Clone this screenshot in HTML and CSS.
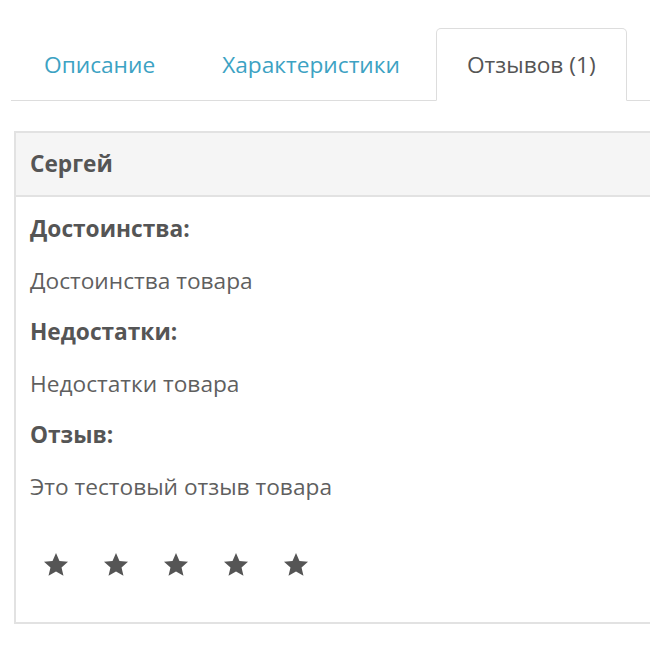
FILE: index.html
```html
<!DOCTYPE html>
<html lang="en">
<head>
    <meta charset="UTF-8">
    <title>Отзывы</title>
    <link rel="stylesheet" href="styles.css">
</head>
<body>
    <div class="page">
        <ul class="tabs">
            <li><a href="#">Описание</a></li>
            <li><a href="#">Характеристики</a></li>
            <li class="active"><a href="#">Отзывов (1)</a></li>
        </ul>

        <div class="review">
            <div class="review-head">Сергей</div>
            <div class="review-body">
                <p class="label">Достоинства:</p>
                <p>Достоинства товара</p>
                <p class="label">Недостатки:</p>
                <p>Недостатки товара</p>
                <p class="label">Отзыв:</p>
                <p>Это тестовый отзыв товара</p>
                <div class="stars">
                    <svg viewBox="0 0 24 24"><path d="M12 1l3.2 7.3 7.9.7-6 5.2 1.8 7.8L12 17.9 5.1 22l1.8-7.8-6-5.2 7.9-.7z"/></svg>
                    <svg viewBox="0 0 24 24"><path d="M12 1l3.2 7.3 7.9.7-6 5.2 1.8 7.8L12 17.9 5.1 22l1.8-7.8-6-5.2 7.9-.7z"/></svg>
                    <svg viewBox="0 0 24 24"><path d="M12 1l3.2 7.3 7.9.7-6 5.2 1.8 7.8L12 17.9 5.1 22l1.8-7.8-6-5.2 7.9-.7z"/></svg>
                    <svg viewBox="0 0 24 24"><path d="M12 1l3.2 7.3 7.9.7-6 5.2 1.8 7.8L12 17.9 5.1 22l1.8-7.8-6-5.2 7.9-.7z"/></svg>
                    <svg viewBox="0 0 24 24"><path d="M12 1l3.2 7.3 7.9.7-6 5.2 1.8 7.8L12 17.9 5.1 22l1.8-7.8-6-5.2 7.9-.7z"/></svg>
                </div>
            </div>
        </div>
    </div>
</body>
</html>
```

FILE: styles.css
```css
/* product reviews tab */
* {
    box-sizing: border-box;
}

body {
    margin: 0;
    overflow: hidden;
    background: #fff;
    font-family: "Open Sans", Arial, sans-serif;
    font-size: 22.7px;
    color: #5f5f5f;
}

.page {
    width: 650px;
    padding: 28px 0 0 11px;
}

.tabs {
    display: flex;
    margin: 0;
    padding: 0 0 0 2px;
    list-style: none;
    border-bottom: 1px solid #ddd;
}

.tabs li {
    margin-right: 5px;
    margin-bottom: -1px;
}

.tabs a {
    display: block;
    height: 73px;
    padding: 0 30px;
    line-height: 72px;
    color: #3ca2c3;
    text-decoration: none;
    border: 1px solid transparent;
    border-radius: 5px 5px 0 0;
}

.tabs .active a {
    color: #555;
    background: #fff;
    border-color: #ddd #ddd transparent;
}

.review {
    width: 700px;
    height: 493px;
    margin: 30px 0 0 3px;
    border: 2px solid #e2e2e2;
}

.review-head {
    height: 64px;
    padding: 0 14px;
    line-height: 62px;
    font-weight: 700;
    color: #555;
    background: #f5f5f5;
    border-bottom: 2px solid #e2e2e2;
}

.review-body {
    padding: 17px 14px 0;
}

.review-body p {
    margin: 0 0 21.6px;
    line-height: 30px;
}

.review-body .label {
    font-weight: 700;
    color: #555;
}

.stars {
    display: flex;
    gap: 34px;
    padding: 28px 0 0 13px;
}

.stars svg {
    width: 26px;
    height: 26px;
    fill: #555;
}
```
